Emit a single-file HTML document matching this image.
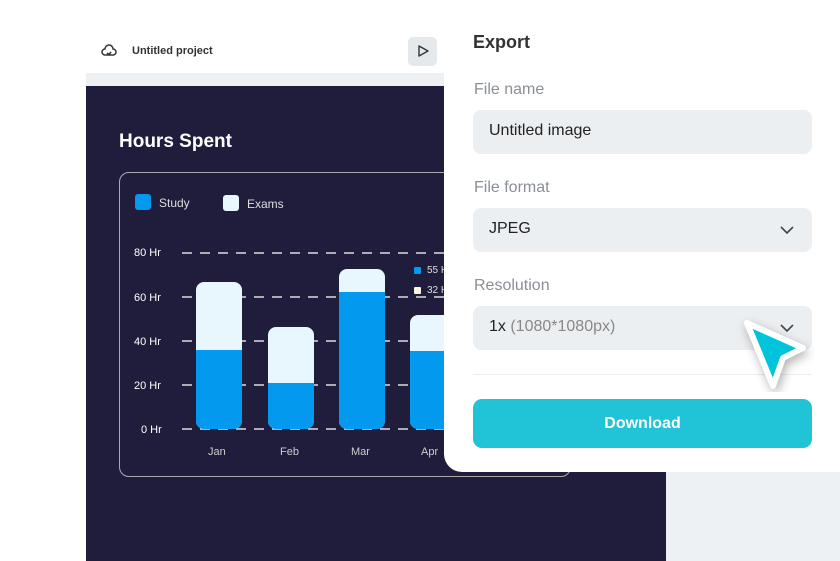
<!DOCTYPE html><html><head><style>
*{margin:0;padding:0;box-sizing:border-box}
body{width:840px;height:561px;background:#fff;position:relative;overflow:hidden;font-family:"Liberation Sans",sans-serif}
.a{position:absolute}
.bar{position:absolute;width:46px;background:#e8f6fe;border-radius:8px;overflow:hidden}
.bar i{position:absolute;left:0;right:0;bottom:0;background:#0399ef}
.yl{position:absolute;left:134px;color:#fff;font-size:11px;width:30px}
.ml{position:absolute;top:446px;color:#ccc;font-size:11px}
.lbl{position:absolute;left:474px;color:#8a8f96;font-size:16px}
.inp{position:absolute;left:473px;width:339px;height:44px;background:#eceff2;border-radius:8px;font-size:16px;color:#222;padding:12px 16px}
</style></head><body>
<div class="a" style="left:86px;top:30px;width:580px;height:43px;background:#fff"></div>
<div class="a" style="left:86px;top:73px;width:580px;height:13px;background:#eef1f4"></div>
<svg class="a" style="left:101px;top:43px" width="16" height="16" viewBox="0 0 16 16" fill="none" stroke="#333" stroke-width="1.5"><path d="M4 12h8a3 3 0 0 0 0-6 4 4 0 0 0-8 0 3 3 0 0 0 0 6z"/><path d="M6 10l2 1.5L10 9"/></svg>
<div class="a" style="left:132px;top:45px;font-size:11px;font-weight:bold;color:#333">Untitled project</div>
<div class="a" style="left:408px;top:37px;width:29px;height:29px;background:#e6e9ec;border-radius:5px"></div>
<svg class="a" style="left:416px;top:44px" width="14" height="14" viewBox="0 0 14 14" fill="none" stroke="#333" stroke-width="1.4"><path d="M3 2l9 5-9 5z" stroke-linejoin="round"/></svg>
<div class="a" style="left:86px;top:86px;width:580px;height:475px;background:#201d3c"></div>
<div class="a" style="left:666px;top:472px;width:174px;height:89px;background:#eef1f4"></div>
<div class="a" style="left:119px;top:131px;color:#fff;font-size:19px;font-weight:bold">Hours Spent</div>
<div class="a" style="left:119px;top:172px;width:452px;height:305px;border:1px solid #aaa;border-radius:10px"></div>
<div class="a" style="left:135px;top:194px;width:16px;height:16px;background:#0399ef;border-radius:3px"></div>
<div class="a" style="left:159px;top:196px;color:#ddd;font-size:12px">Study</div>
<div class="a" style="left:223px;top:195px;width:16px;height:16px;background:#e8f6fe;border-radius:3px"></div>
<div class="a" style="left:247px;top:197px;color:#ddd;font-size:12px">Exams</div>
<svg class="a" style="left:182px;top:250px" width="280" height="185"><g stroke="#ddd" stroke-width="1.5" stroke-dasharray="10 8"><line x1="0" y1="3" x2="280" y2="3"/><line x1="0" y1="47" x2="280" y2="47"/><line x1="0" y1="91" x2="280" y2="91"/><line x1="0" y1="135" x2="280" y2="135"/><line x1="0" y1="179" x2="280" y2="179"/></g></svg>
<div class="yl" style="top:247px">80 Hr</div><div class="yl" style="top:292px">60 Hr</div><div class="yl" style="top:336px">40 Hr</div><div class="yl" style="top:380px">20 Hr</div><div class="yl" style="top:424px;left:141px">0 Hr</div>
<div class="bar" style="left:196px;top:282px;height:147px"><i style="height:79px"></i></div>
<div class="bar" style="left:268px;top:327px;height:102px"><i style="height:46px"></i></div>
<div class="bar" style="left:339px;top:269px;height:160px"><i style="height:137px"></i></div>
<div class="bar" style="left:410px;top:315px;height:114px"><i style="height:78px"></i></div>
<div class="a" style="left:414px;top:267px;width:7px;height:7px;background:#0399ef;border-radius:1px"></div>
<div class="a" style="left:427px;top:265px;color:#ddd;font-size:10px">55 H</div>
<div class="a" style="left:414px;top:287px;width:7px;height:7px;background:#fdf1e0;border-radius:1px"></div>
<div class="a" style="left:427px;top:285px;color:#ddd;font-size:10px">32 H</div>
<div class="ml" style="left:208px">Jan</div><div class="ml" style="left:280px">Feb</div><div class="ml" style="left:351px">Mar</div><div class="ml" style="left:421px">Apr</div>
<div class="a" style="left:444px;top:0;width:396px;height:472px;background:#fff;border-bottom-left-radius:18px"></div>
<div class="a" style="left:473px;top:32px;font-size:18px;font-weight:bold;color:#333">Export</div>
<div class="lbl" style="top:81px">File name</div>
<div class="inp" style="top:110px">Untitled image</div>
<div class="lbl" style="top:179px">File format</div>
<div class="inp" style="top:208px">JPEG</div>
<div class="lbl" style="top:277px">Resolution</div>
<div class="inp" style="top:306px">1x <span style="color:#888">(1080*1080px)</span></div>
<svg class="a" style="left:779px;top:222px" width="16" height="16" fill="none" stroke="#444" stroke-width="1.6"><path d="M2 5l6 6 6-6"/></svg>
<svg class="a" style="left:779px;top:320px" width="16" height="16" fill="none" stroke="#444" stroke-width="1.6"><path d="M2 5l6 6 6-6"/></svg>
<div class="a" style="left:473px;top:374px;width:339px;height:1px;background:#eceff2"></div>
<div class="a" style="left:473px;top:399px;width:339px;height:49px;background:#21c3d6;border-radius:9px;color:#fff;font-weight:bold;font-size:16px;text-align:center;line-height:49px">Download</div>
<svg class="a" style="left:735px;top:312px" width="80" height="80"><path d="M12 11l56 25-20 10-10 28z" fill="#00c3dc" stroke="#fff" stroke-width="6" stroke-linejoin="round" style="filter:drop-shadow(2px 4px 5px rgba(0,0,0,.3))"/></svg>
</body></html>
